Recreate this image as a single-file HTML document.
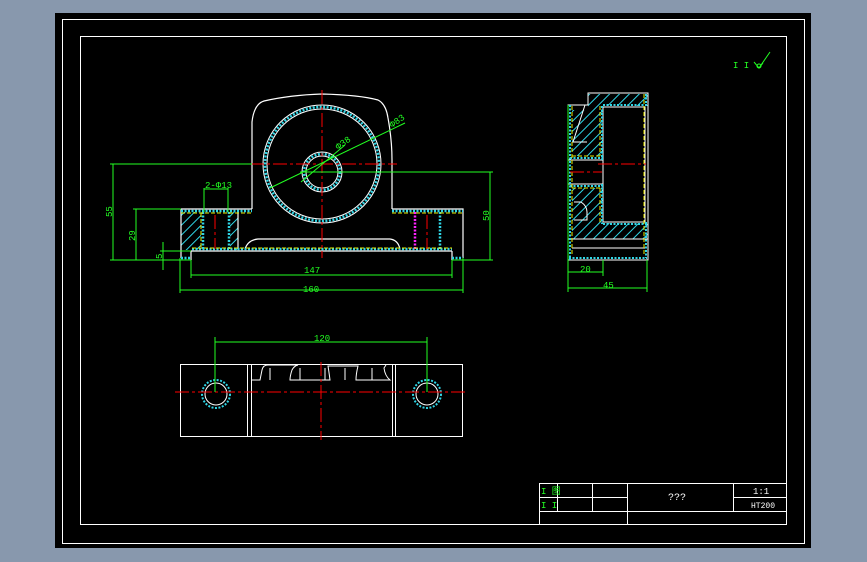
<!DOCTYPE html>
<html><head><meta charset="utf-8">
<style>
html,body{margin:0;padding:0;width:867px;height:562px;overflow:hidden;background:#8898ad;}
svg{display:block}
text{font-family:"Liberation Mono","Noto Sans CJK SC",monospace;}
</style></head>
<body>
<svg width="867" height="562" viewBox="0 0 867 562" xmlns="http://www.w3.org/2000/svg">
<defs>
<pattern id="h" width="7" height="7" patternUnits="userSpaceOnUse" patternTransform="rotate(45)">
<line x1="0.5" y1="0" x2="0.5" y2="7" stroke="#2fd6e6" stroke-width="1"/>
</pattern>
</defs>
<rect x="0" y="0" width="867" height="562" fill="#8898ad"/>
<rect x="55" y="13" width="756" height="535" fill="#000"/>
<rect x="62.5" y="19.5" width="742" height="524" fill="none" stroke="#fff" stroke-width="1"/>
<rect x="80.5" y="36.5" width="706" height="488" fill="none" stroke="#fff" stroke-width="1"/>

<!-- Title block -->
<g stroke="#fff" stroke-width="1" fill="none">
<rect x="539.5" y="483.5" width="247" height="41"/>
<line x1="539.5" y1="497.5" x2="627" y2="497.5"/>
<line x1="539.5" y1="511.5" x2="786" y2="511.5"/>
<line x1="733" y1="497.5" x2="786" y2="497.5"/>
<line x1="557.5" y1="483" x2="557.5" y2="511"/>
<line x1="592.5" y1="483" x2="592.5" y2="511"/>
<line x1="627.5" y1="483" x2="627.5" y2="525"/>
<line x1="733.5" y1="483" x2="733.5" y2="511"/>
</g>
<text x="541" y="494" font-size="9" fill="#2f2">I 图</text>
<text x="541" y="508" font-size="9" fill="#2f2">I I</text>
<text x="668" y="500" font-size="10" fill="#fff">???</text>
<text x="753" y="494" font-size="9" fill="#fff">1:1</text>
<text x="751" y="508" font-size="8" fill="#fff">HT200</text>

<!-- roughness symbol -->
<text x="733" y="68" font-size="9" fill="#2f2">I I</text>
<path d="M754 62 L759 68 L763 63 M759 68 L770 52" stroke="#2f2" fill="none" stroke-width="1"/>
<circle cx="759" cy="66" r="2" stroke="#2f2" fill="none"/>

<!-- ============ FRONT VIEW ============ -->
<rect x="181" y="212" width="20" height="38" fill="url(#h)"/>
<rect x="230" y="212" width="8" height="38" fill="url(#h)"/>
<g stroke="#fff" stroke-width="1.2" fill="none">
<path d="M252 209 L252 122 Q254 104 264 101 Q290 95 322 94 Q360 95 378 100 Q386 104 388 118 Q392 140 392 160 L392 209"/>
<path d="M181 209 L252 209 M392 209 L463 209 L463 258"/>
<path d="M181 209 L181 258"/>
<path d="M191 251 L452 251 M191 251 L191 260 M452 251 L452 260"/>
<path d="M238 212 L238 249"/>
<path d="M245 249 Q248 240 258 239 L390 239 Q398 240 400 249"/>
</g>
<g stroke="#2fd6e6" stroke-width="2.5" fill="none" stroke-dasharray="2,1.5">
<circle cx="322" cy="164" r="57"/>
<circle cx="322" cy="172" r="18"/>
<line x1="192" y1="249" x2="452" y2="249"/>
<line x1="181" y1="211" x2="252" y2="211"/>
<line x1="392" y1="211" x2="463" y2="211"/>
<line x1="203" y1="212" x2="203" y2="249"/>
<line x1="229" y1="212" x2="229" y2="249"/>
<line x1="440" y1="212" x2="440" y2="249"/>
<line x1="181" y1="258" x2="191" y2="258"/>
<line x1="452" y1="258" x2="463" y2="258"/>
</g>
<g stroke="#fff" stroke-width="1" fill="none">
<circle cx="322" cy="164" r="59"/>
<circle cx="322" cy="164" r="55"/>
<circle cx="322" cy="172" r="20"/>
<circle cx="322" cy="172" r="16"/>
</g>
<line x1="415" y1="212" x2="415" y2="249" stroke="#f2f" stroke-width="2.5" stroke-dasharray="2,1.5"/>
<g stroke="#ee0" stroke-width="1" fill="none" stroke-dasharray="4,2">
<line x1="181" y1="213" x2="252" y2="213"/>
<line x1="392" y1="213" x2="463" y2="213"/>
<line x1="201" y1="213" x2="201" y2="249"/>
<line x1="192" y1="248" x2="452" y2="248"/>
</g>
<g stroke="#f00" stroke-width="1" fill="none" stroke-dasharray="14,3,3,3">
<line x1="250" y1="164" x2="397" y2="164"/>
<line x1="322" y1="90" x2="322" y2="258"/>
<line x1="215" y1="215" x2="215" y2="249"/>
<line x1="427" y1="215" x2="427" y2="249"/>
</g>
<g stroke="#2f2" stroke-width="1" fill="none">
<line x1="110" y1="164" x2="252" y2="164"/>
<line x1="300" y1="172" x2="493" y2="172"/>
<line x1="133" y1="209" x2="181" y2="209"/>
<line x1="160" y1="251" x2="191" y2="251"/>
<line x1="110" y1="260" x2="191" y2="260"/>
<line x1="452" y1="260" x2="493" y2="260"/>
<line x1="113" y1="164" x2="113" y2="260"/>
<line x1="136" y1="209" x2="136" y2="260"/>
<line x1="163" y1="242" x2="163" y2="270"/>
<line x1="490" y1="172" x2="490" y2="260"/>
<line x1="191" y1="260" x2="191" y2="278"/>
<line x1="452" y1="260" x2="452" y2="278"/>
<line x1="180" y1="258" x2="180" y2="293"/>
<line x1="463" y1="258" x2="463" y2="293"/>
<line x1="191" y1="275" x2="452" y2="275"/>
<line x1="180" y1="290" x2="463" y2="290"/>
<line x1="204" y1="188" x2="204" y2="212"/>
<line x1="228" y1="188" x2="228" y2="212"/>
<line x1="204" y1="189" x2="228" y2="189"/>
<line x1="270" y1="188" x2="405" y2="123"/>
<line x1="301" y1="182" x2="345" y2="145"/>
</g>
<g fill="#2f2" font-size="9">
<text x="304" y="273">147</text>
<text x="303" y="292">160</text>
<text x="205" y="188">2-Φ13</text>
<text transform="translate(112,217) rotate(-90)">55</text>
<text transform="translate(135,241) rotate(-90)">29</text>
<text transform="translate(162,259) rotate(-90)">5</text>
<text transform="translate(489,221) rotate(-90)">50</text>
<text transform="translate(338,150) rotate(-35)">Φ38</text>
<text transform="translate(392,128) rotate(-35)">Φ83</text>
</g>

<!-- ============ SIDE VIEW ============ -->
<rect x="588" y="94" width="60" height="12" fill="url(#h)"/>
<rect x="588" y="106" width="15" height="50" fill="url(#h)"/>
<rect x="572" y="110" width="16" height="46" fill="url(#h)"/>
<rect x="572" y="188" width="31" height="35" fill="url(#h)"/>
<rect x="572" y="223" width="76" height="16" fill="url(#h)"/>
<g stroke="#fff" stroke-width="1" fill="none">
<path d="M568 105 L588 105 L588 93 L648 93 L648 260 L568 260 Z"/>
<line x1="568" y1="160" x2="603" y2="160"/>
<line x1="568" y1="184" x2="603" y2="184"/>
<rect x="603" y="107" width="42" height="115"/>
<line x1="568" y1="239" x2="648" y2="239"/>
<line x1="572" y1="248" x2="645" y2="248"/>
<path d="M585 105 L573 142 L587 142"/>
<path d="M574 202 L581 202 Q587 206 587 212 L587 220 L574 220"/>
</g>
<g stroke="#2fd6e6" stroke-width="2" fill="none" stroke-dasharray="2,1.5">
<line x1="570" y1="105" x2="570" y2="260"/>
<line x1="569" y1="258" x2="647" y2="258"/>
<line x1="646" y1="94" x2="646" y2="106"/>
<line x1="646" y1="222" x2="646" y2="258"/>
<line x1="602" y1="106" x2="602" y2="160"/>
<line x1="602" y1="184" x2="602" y2="224"/>
<line x1="570" y1="158" x2="603" y2="158"/>
<line x1="570" y1="186" x2="603" y2="186"/>
<line x1="603" y1="105" x2="647" y2="105"/>
<line x1="603" y1="224" x2="647" y2="224"/>
</g>
<g stroke="#ee0" stroke-width="1" fill="none" stroke-dasharray="4,2">
<line x1="572" y1="106" x2="572" y2="256"/>
<line x1="644" y1="94" x2="644" y2="256"/>
<line x1="600" y1="106" x2="600" y2="156"/>
<line x1="600" y1="188" x2="600" y2="223"/>
<line x1="572" y1="156" x2="600" y2="156"/>
<line x1="572" y1="188" x2="600" y2="188"/>
</g>
<g stroke="#f00" stroke-width="1" stroke-dasharray="14,3,3,3">
<line x1="598" y1="164" x2="646" y2="164"/>
<line x1="570" y1="172" x2="602" y2="172"/>
</g>
<g stroke="#2f2" stroke-width="1" fill="none">
<line x1="568" y1="105" x2="568" y2="292"/>
<line x1="603" y1="260" x2="603" y2="276"/>
<line x1="647" y1="260" x2="647" y2="292"/>
<line x1="568" y1="272" x2="603" y2="272"/>
<line x1="568" y1="288" x2="647" y2="288"/>
</g>
<text x="580" y="272" font-size="9" fill="#2f2">20</text>
<text x="603" y="288" font-size="9" fill="#2f2">45</text>

<!-- ============ PLAN VIEW ============ -->
<g stroke="#fff" stroke-width="1" fill="none">
<rect x="180.5" y="364.5" width="282" height="72"/>
<line x1="247.5" y1="364" x2="247.5" y2="437"/>
<line x1="251.5" y1="364" x2="251.5" y2="437"/>
<line x1="392.5" y1="364" x2="392.5" y2="437"/>
<line x1="395.5" y1="364" x2="395.5" y2="437"/>
<path d="M252 380 L260 380 L262 370 Q263 365 268 365 L298 365 Q294 366 292 370 Q290 376 290 380 L330 380 Q329 372 328 366 L358 366 Q356 374 356 380 L390 380 Q385 376 384 368 L386 365"/>
<path d="M270 368 L270 380 M300 368 L300 380 M325 368 L325 380 M345 368 L345 380 M372 368 L372 380"/>
</g>
<g stroke="#2fd6e6" stroke-width="2" fill="none" stroke-dasharray="2,1.5">
<circle cx="216" cy="394" r="14"/>
<circle cx="427" cy="394" r="14"/>
</g>
<g stroke="#fff" stroke-width="1" fill="none">
<circle cx="216" cy="394" r="11"/>
<circle cx="427" cy="394" r="11"/>
</g>
<g stroke="#f00" stroke-width="1" stroke-dasharray="14,3,3,3">
<line x1="175" y1="392" x2="468" y2="392"/>
<line x1="321" y1="362" x2="321" y2="440"/>
</g>
<g stroke="#2f2" stroke-width="1" fill="none">
<line x1="215" y1="337" x2="215" y2="392"/>
<line x1="427" y1="337" x2="427" y2="392"/>
<line x1="215" y1="342" x2="427" y2="342"/>
</g>
<text x="314" y="341" font-size="9" fill="#2f2">120</text>
</svg>
</body></html>
